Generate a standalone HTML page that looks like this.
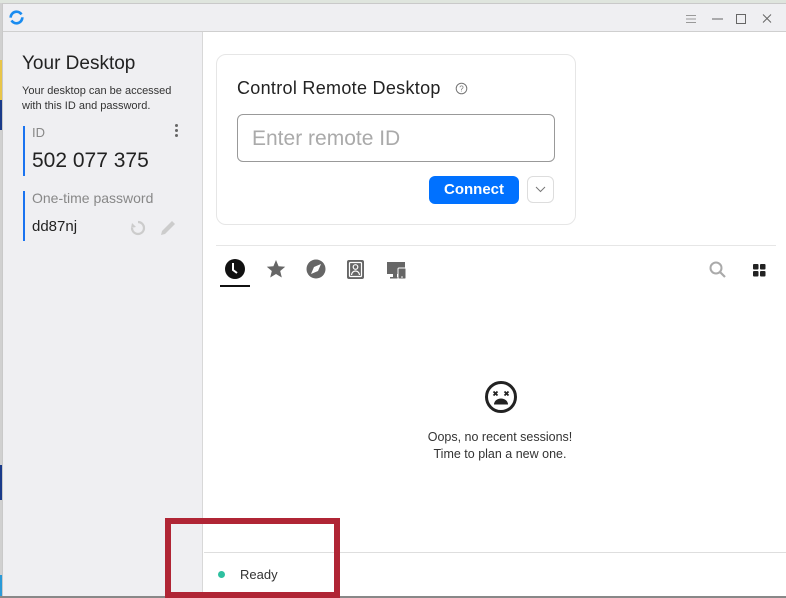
<!DOCTYPE html>
<html><head><meta charset="utf-8"><style>
*{margin:0;padding:0;box-sizing:border-box}
body{width:786px;height:598px;overflow:hidden;background:#dfe5de;font-family:"Liberation Sans",sans-serif;position:relative}
.abs{position:absolute}
</style></head><body>
<div class="abs" style="left:0;top:3px;width:2px;height:595px;background:#d0d0d0"></div>
<div class="abs" style="left:0;top:60px;width:2px;height:40px;background:#e8c54a"></div>
<div class="abs" style="left:0;top:100px;width:2px;height:30px;background:#1a3a8a"></div>
<div class="abs" style="left:0;top:465px;width:2px;height:35px;background:#1a3a8a"></div>
<div class="abs" style="left:0;top:575px;width:2px;height:23px;background:#2a9ad8"></div>
<div class="abs" style="left:2px;top:3px;width:784px;height:593px;background:#fff;border-left:1px solid #c9c9c9;border-top:1px solid #c9c9c9">
  <div class="abs" style="left:0;top:0;width:783px;height:28px;background:#efeff2;border-bottom:1px solid #cfcfcf">
    <svg class="abs" style="left:5px;top:5px" width="17" height="17" viewBox="0 0 17 17"><circle cx="8.5" cy="8.5" r="5.8" fill="none" stroke="#1a8cf0" stroke-width="2.6" stroke-dasharray="15 3"/></svg>
    <svg class="abs" style="left:680px;top:8px" width="100" height="14" viewBox="0 0 100 14">
      <g stroke="#999" stroke-width="1" fill="none">
        <path d="M3 3.5h10M3 7h10M3 10.5h10"/>
        <path d="M29 7h11" stroke="#666"/>
        <rect x="53.5" y="2.5" width="9" height="9" stroke="#666"/>
        <path d="M80 2.5l8 8M88 2.5l-8 8" stroke="#666"/>
      </g></svg>
  </div>
  <div class="abs" style="left:0;top:28px;width:200px;height:565px;background:#efeff2;border-right:1px solid #d8d8d8">
    <div class="abs" style="left:19px;top:21px;font-size:19px;color:#222">Your Desktop</div>
    <div class="abs" style="left:19px;top:52px;font-size:11px;line-height:15px;color:#333">Your desktop can be accessed<br>with this ID and password.</div>
    <div class="abs" style="left:20px;top:94px;width:2px;height:50px;background:#1a73f0"></div>
    <div class="abs" style="left:29px;top:93px;font-size:13px;color:#888">ID</div>
    <div class="abs" style="left:172px;top:92px;width:3px"><div style="width:3px;height:3px;background:#666;border-radius:2px;margin-bottom:2px"></div><div style="width:3px;height:3px;background:#666;border-radius:2px;margin-bottom:2px"></div><div style="width:3px;height:3px;background:#666;border-radius:2px"></div></div>
    <div class="abs" style="left:29px;top:117px;font-size:21px;color:#222">502 077 375</div>
    <div class="abs" style="left:20px;top:159px;width:2px;height:50px;background:#1a73f0"></div>
    <div class="abs" style="left:29px;top:158px;font-size:14px;color:#888">One-time password</div>
    <div class="abs" style="left:29px;top:186px;font-size:15px;color:#222">dd87nj</div>
    <svg class="abs" style="left:126px;top:186px" width="50" height="20" viewBox="0 0 50 20">
      <path d="M9 4a6 6 0 1 1-6 6" fill="none" stroke="#ccc" stroke-width="2.2"/><path d="M3 5l4 4-5 1z" fill="#ccc"/>
      <path d="M32 17l1-4 10-10 3 3-10 10z" fill="#ccc"/>
    </svg>
  </div>
  <div class="abs" style="left:213px;top:50px;width:360px;height:171px;border:1px solid #e6e6e6;border-radius:10px">
    <div class="abs" style="left:20px;top:23px;font-size:18px;color:#222;letter-spacing:0.3px">Control Remote Desktop</div>
    <svg class="abs" style="left:238px;top:27px" width="13" height="13" viewBox="0 0 13 13"><circle cx="6.5" cy="6.5" r="5.3" fill="none" stroke="#777" stroke-width="1"/><text x="6.5" y="9.5" font-size="8" text-anchor="middle" fill="#777" font-family="Liberation Sans">?</text></svg>
    <div class="abs" style="left:20px;top:59px;width:318px;height:48px;border:1px solid #999;border-radius:6px;font-size:21px;color:#aaa;padding:12px 0 0 14px">Enter remote ID</div>
    <div class="abs" style="left:212px;top:121px;width:90px;height:28px;background:#0071ff;border-radius:6px;color:#fff;font-size:15px;font-weight:bold;text-align:center;line-height:28px">Connect</div>
    <div class="abs" style="left:310px;top:121px;width:27px;height:27px;border:1px solid #ddd;border-radius:6px"><svg width="25" height="25" viewBox="0 0 25 25"><path d="M8 10l4.5 4.5L17 10" fill="none" stroke="#777" stroke-width="1"/></svg></div>
  </div>
  <div class="abs" style="left:213px;top:241px;width:560px;height:1px;background:#e6e6e6"></div>
  <svg class="abs" style="left:214px;top:253px" width="200" height="32" viewBox="0 0 200 32">
    <circle cx="18" cy="12" r="10" fill="#111"/><path d="M16 6v7l4 3" fill="none" stroke="#fff" stroke-width="2"/>
    <rect x="3" y="28" width="30" height="2" fill="#111"/>
    <path d="M59 3l2.6 6.2 6.6.5-5 4.3 1.6 6.5L59 17l-5.8 3.5 1.6-6.5-5-4.3 6.6-.5z" fill="#666"/>
    <circle cx="99" cy="12" r="9.5" fill="#666"/><path d="M104 7l-7 3-3 7 7-3z" fill="#fff"/>
    <rect x="130" y="3" width="17" height="19" rx="2" fill="#666"/><rect x="132.5" y="5.5" width="12" height="14" rx="1" fill="none" stroke="#fff" stroke-width="1.2"/><circle cx="138.5" cy="10" r="2.3" fill="none" stroke="#fff" stroke-width="1.2"/><path d="M134.5 18a4 4 0 0 1 8 0" fill="none" stroke="#fff" stroke-width="1.2"/>
    <rect x="170" y="5" width="18" height="12" fill="#666"/><rect x="176" y="17" width="4" height="3" fill="#666"/><rect x="173" y="20" width="8" height="1.5" fill="#666"/><rect x="181" y="11" width="8" height="11" rx="1" fill="#666" stroke="#fff" stroke-width="1"/><circle cx="185" cy="20" r="0.8" fill="#fff"/>
  </svg>
  <svg class="abs" style="left:705px;top:256px" width="70" height="20" viewBox="0 0 70 20">
    <circle cx="8" cy="8" r="5.5" fill="none" stroke="#aaa" stroke-width="2"/><path d="M12 12l5 5" stroke="#aaa" stroke-width="2.2"/>
    <rect x="45" y="4" width="5.5" height="5.5" rx="1" fill="#222"/><rect x="52" y="4" width="5.5" height="5.5" rx="1" fill="#222"/><rect x="45" y="11" width="5.5" height="5.5" rx="1" fill="#222"/><rect x="52" y="11" width="5.5" height="5.5" rx="1" fill="#222"/>
  </svg>
  <svg class="abs" style="left:480px;top:375px" width="36" height="36" viewBox="0 0 36 36">
    <circle cx="18" cy="18" r="14.5" fill="none" stroke="#222" stroke-width="3"/>
    <path d="M10.5 12.5l4 4M14.5 12.5l-4 4M21.5 12.5l4 4M25.5 12.5l-4 4" stroke="#222" stroke-width="1.8"/>
    <path d="M11 25.5a7 6 0 0 1 14 0z" fill="#222"/>
  </svg>
  <div class="abs" style="left:300px;top:425px;width:394px;text-align:center;font-size:12.5px;line-height:17px;color:#333">Oops, no recent sessions!<br>Time to plan a new one.</div>
  <div class="abs" style="left:201px;top:548px;width:582px;height:1px;background:#dedede"></div>
  <div class="abs" style="left:215px;top:567px;width:7px;height:7px;border-radius:50%;background:#2fc0a0"></div>
  <div class="abs" style="left:237px;top:563px;font-size:13px;color:#333">Ready</div>
</div>
<div class="abs" style="left:0;top:596px;width:786px;height:2px;background:#888"></div>
<div class="abs" style="left:165px;top:518px;width:175px;height:80px;border:6px solid #b02535"></div>
</body></html>
